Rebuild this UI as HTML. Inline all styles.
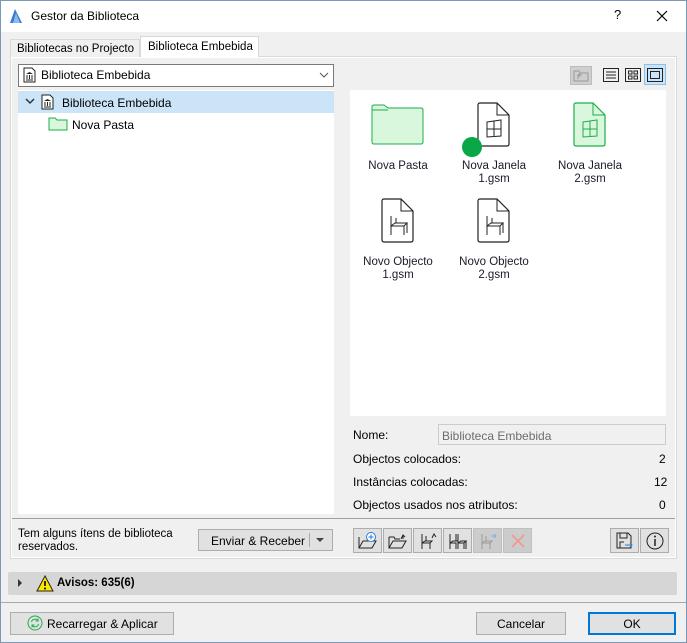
<!DOCTYPE html>
<html><head><meta charset="utf-8"><style>
*{box-sizing:border-box;margin:0;padding:0}
body{width:687px;height:643px;overflow:hidden;font-family:"Liberation Sans",sans-serif;font-size:12px;color:#000;background:#f0f0f0;position:relative}
.a{position:absolute}
.win{left:0;top:0;width:687px;height:643px;border:1px solid #7a98b8;background:#f0f0f0}
.btn{position:absolute;background:#e1e1e1;border:1px solid #adadad;text-align:center}
.ib{position:absolute;width:29px;height:25px;background:#e1e1e1;border:1px solid #adadad}
.ib svg{position:absolute;left:4px;top:3px}
.lbl{position:absolute;text-align:center;width:90px;font-size:11.5px;line-height:13px;color:#1a1a2a}
</style></head><body>
<div class="a win"></div>
<div class="a" style="left:1px;top:1px;width:685px;height:31px;background:#fff"></div>
<svg class="a" style="left:9px;top:8px" width="14" height="16"><path d="M1 15 L6 1 L13 15 Z" fill="#3a7bd5"/><path d="M4 15 L7 5 L11 15Z" fill="#8fb8ee"/></svg>
<div class="a" style="left:31px;top:9px;font-size:12px">Gestor da Biblioteca</div>
<div class="a" style="left:614px;top:7px;font-size:13px">?</div>
<svg class="a" style="left:656px;top:10px" width="12" height="12"><path d="M1 1L11 11M11 1L1 11" stroke="#000" stroke-width="1.2"/></svg>

<div class="a" style="left:10px;top:56px;width:667px;height:503px;border:1px solid #d9d9d9;background:#f0f0f0"></div>
<div class="a" style="left:10px;top:39px;width:130px;height:18px;border:1px solid #d9d9d9;border-bottom:none;background:#f0f0f0;padding:3px 0 0 6px;font-size:11.5px">Bibliotecas no Projecto</div>
<div class="a" style="left:140px;top:36px;width:119px;height:21px;border:1px solid #d9d9d9;border-bottom:none;background:#fff;padding:4px 0 0 7px;font-size:11.5px">Biblioteca Embebida</div>
<div class="a" style="left:11px;top:57px;width:665px;height:501px;background:#fff"></div>
<div class="a" style="left:12px;top:58px;width:663px;height:499px;background:#f0f0f0"></div>

<div class="a" style="left:18px;top:64px;width:316px;height:23px;border:1px solid #7a7a7a;background:#fff"></div>
<svg class="a" style="left:23px;top:67px" width="13" height="16"><path d="M1 1H9L12 4V15H1Z" fill="#fff" stroke="#222"/><path d="M3 7L6.5 5L10 7ZM3.5 8h1v4h-1zM6 8h1v4H6zM8.5 8h1v4h-1zM3 12.5h7v1H3z" fill="#222"/></svg>
<div class="a" style="left:41px;top:68px;font-size:12px">Biblioteca Embebida</div>
<svg class="a" style="left:319px;top:72px" width="10" height="6"><path d="M1 1L5 5L9 1" stroke="#555" fill="none"/></svg>

<div class="a" style="left:18px;top:90px;width:316px;height:424px;background:#fff"></div>
<div class="a" style="left:18px;top:91px;width:316px;height:22px;background:#cce4f7"></div>
<svg class="a" style="left:25px;top:98px" width="10" height="7"><path d="M1 1L5 5L9 1" stroke="#333" stroke-width="1.5" fill="none"/></svg>
<svg class="a" style="left:41px;top:94px" width="13" height="16"><path d="M1 1H9L12 4V15H1Z" fill="#fff" stroke="#222"/><path d="M3 7L6.5 5L10 7ZM3.5 8h1v4h-1zM6 8h1v4H6zM8.5 8h1v4h-1zM3 12.5h7v1H3z" fill="#222"/></svg>
<div class="a" style="left:62px;top:96px">Biblioteca Embebida</div>
<svg class="a" style="left:48px;top:117px" width="20" height="14"><path d="M1 1H7L9 3H19V13H1Z" fill="#d9f7dc" stroke="#1fae4d"/></svg>
<div class="a" style="left:72px;top:118px">Nova Pasta</div>

<div class="a" style="left:570px;top:66px;width:22px;height:19px;background:#cfcfcf;border:1px solid #bcbcbc"></div>
<svg class="a" style="left:573px;top:69px" width="16" height="13"><path d="M1 2H6L7 4H15V12H1Z" fill="none" stroke="#999"/><path d="M5 10V6H9M7 4.5L5 6L7 7.5" stroke="#999" fill="none"/></svg>
<svg class="a" style="left:603px;top:68px" width="16" height="14"><rect x="0.5" y="0.5" width="15" height="13" fill="none" stroke="#222"/><path d="M3 4H13M3 7H13M3 10H13" stroke="#222"/></svg>
<svg class="a" style="left:625px;top:68px" width="16" height="14"><rect x="0.5" y="0.5" width="15" height="13" fill="none" stroke="#222"/><rect x="3.5" y="3" width="3.5" height="3" fill="none" stroke="#222"/><rect x="9" y="3" width="3.5" height="3" fill="none" stroke="#222"/><rect x="3.5" y="8" width="3.5" height="3" fill="none" stroke="#222"/><rect x="9" y="8" width="3.5" height="3" fill="none" stroke="#222"/></svg>
<div class="a" style="left:644px;top:64px;width:22px;height:21px;background:#cce4f7;border:1px solid #8ac0ee"></div>
<svg class="a" style="left:647px;top:68px" width="16" height="14"><rect x="0.5" y="0.5" width="15" height="13" fill="none" stroke="#222"/><rect x="3.5" y="3.5" width="9" height="7" fill="none" stroke="#222"/></svg>

<div class="a" style="left:350px;top:90px;width:316px;height:326px;background:#fff"></div>
<svg class="a" style="left:371px;top:104px" width="54" height="41"><path d="M1 3Q1 1 3 1H13L17 4H50Q52 4 52 6V38Q52 40 50 40H3Q1 40 1 38Z" fill="#d9f7dc" stroke="#1fae4d"/><path d="M1 6H17" stroke="#1fae4d"/></svg>
<div class="lbl" style="left:353px;top:160px">Nova Pasta</div>

<svg class="a" style="left:477px;top:102px" width="34" height="46"><path d="M3 1H20L32 13V42Q32 44 30 44H3Q1 44 1 42V3Q1 1 3 1Z" fill="#fff" stroke="#222" stroke-width="1.2"/><path d="M20 1V13H32" fill="none" stroke="#222"/><path d="M10 20L24 18V34L10 35Z M17 19V35M10 27H24" fill="none" stroke="#222"/></svg>
<div class="a" style="left:462px;top:137px;width:20px;height:20px;border-radius:50%;background:#08a847"></div>
<div class="lbl" style="left:449px;top:160px">Nova Janela<br>1.gsm</div>

<svg class="a" style="left:573px;top:102px" width="34" height="46"><path d="M3 1H20L32 13V42Q32 44 30 44H3Q1 44 1 42V3Q1 1 3 1Z" fill="#d9f7dc" stroke="#1fae4d" stroke-width="1.2"/><path d="M20 1V13H32" fill="none" stroke="#1fae4d"/><path d="M10 20L24 18V34L10 35Z M17 19V35M10 27H24" fill="none" stroke="#1fae4d"/></svg>
<div class="lbl" style="left:545px;top:160px">Nova Janela<br>2.gsm</div>

<svg class="a" style="left:381px;top:198px" width="34" height="46"><path d="M3 1H20L32 13V42Q32 44 30 44H3Q1 44 1 42V3Q1 1 3 1Z" fill="#fff" stroke="#222" stroke-width="1.2"/><path d="M20 1V13H32" fill="none" stroke="#222"/><path d="M10 18V37M10 28H23V37M10 28L14 25H26L23 28M26 25V35M15 25V20" fill="none" stroke="#222"/></svg>
<div class="lbl" style="left:353px;top:256px">Novo Objecto<br>1.gsm</div>
<svg class="a" style="left:477px;top:198px" width="34" height="46"><path d="M3 1H20L32 13V42Q32 44 30 44H3Q1 44 1 42V3Q1 1 3 1Z" fill="#fff" stroke="#222" stroke-width="1.2"/><path d="M20 1V13H32" fill="none" stroke="#222"/><path d="M10 18V37M10 28H23V37M10 28L14 25H26L23 28M26 25V35M15 25V20" fill="none" stroke="#222"/></svg>
<div class="lbl" style="left:449px;top:256px">Novo Objecto<br>2.gsm</div>

<div class="a" style="left:353px;top:428px">Nome:</div>
<div class="a" style="left:438px;top:424px;width:228px;height:21px;border:1px solid #ccc;background:#f0f0f0;color:#6d6d6d;padding:4px 0 0 3px">Biblioteca Embebida</div>
<div class="a" style="left:353px;top:452px">Objectos colocados:</div><div class="a" style="left:659px;top:452px">2</div>
<div class="a" style="left:353px;top:475px">Instâncias colocadas:</div><div class="a" style="left:654px;top:475px">12</div>
<div class="a" style="left:353px;top:498px">Objectos usados nos atributos:</div><div class="a" style="left:659px;top:498px">0</div>

<div class="a" style="left:12px;top:518px;width:663px;height:1px;background:#a0a0a0"></div>
<div class="a" style="left:18px;top:528px;font-size:11.5px;line-height:13px">Tem alguns ítens de biblioteca<br>reservados.</div>
<div class="btn" style="left:198px;top:529px;width:135px;height:22px;padding-top:4px;text-align:left;padding-left:12px">Enviar &amp; Receber</div>
<div class="a" style="left:309px;top:533px;width:1px;height:14px;background:#aaa"></div>
<div class="a" style="left:316px;top:538px;border:4px solid transparent;border-top:4px solid #444"></div>

<div class="ib" style="left:353px;top:528px"><svg width="20" height="18"><path d="M1 5V16H14L18 9H5L1 16" fill="none" stroke="#222"/><circle cx="13" cy="5" r="4.5" fill="#fff" stroke="#2a7ad5"/><path d="M13 2.5V7.5M10.5 5H15.5" stroke="#2a7ad5"/></svg></div>
<div class="ib" style="left:383px;top:528px"><svg width="20" height="18"><path d="M1 5H6L7 7H12M1 5V16H14L18 9H5L1 16" fill="none" stroke="#222"/><path d="M13 7L15 3L17 5M15 3V7" fill="none" stroke="#222"/></svg></div>
<div class="ib" style="left:413px;top:528px"><svg width="20" height="18"><path d="M4 2V17M4 11H12V17M4 11L7 9H14L12 11M8 9V4" fill="none" stroke="#222"/><path d="M14 6L16 2L18 5" fill="none" stroke="#222"/></svg></div>
<div class="ib" style="left:443px;top:528px"><svg width="20" height="18"><path d="M2 2V17M2 11H8V17M2 11L5 9H10M8 2V9M10 2V17M10 11H16V17M10 11L13 9H18L16 11M18 9V17" fill="none" stroke="#222"/></svg></div>
<div class="ib" style="left:473px;top:528px;background:#cccccc;border-color:#bfbfbf"><svg width="20" height="18"><path d="M4 2V17M4 11H12V17M4 11L7 9H14L12 11M8 9V4" fill="none" stroke="#9a9a9a"/><path d="M13 4H18M16 2L18 4L16 6" fill="none" stroke="#7ab0ee"/></svg></div>
<div class="ib" style="left:503px;top:528px;background:#cccccc;border-color:#bfbfbf"><svg width="20" height="18"><path d="M4 3L16 15M16 3L4 15" stroke="#f09a8c" stroke-width="1.6"/></svg></div>
<div class="ib" style="left:610px;top:528px"><svg width="20" height="18"><path d="M2 1H13L16 4V16H2Z M5 1V6H12V1 M5 16V10H9" fill="none" stroke="#222"/><path d="M10 13H17M15 11L17 13L15 15" fill="none" stroke="#2a7ad5"/></svg></div>
<div class="ib" style="left:640px;top:528px"><svg width="20" height="18"><circle cx="10" cy="9" r="8" fill="none" stroke="#222"/><path d="M10 7V14" stroke="#222" stroke-width="1.5"/><circle cx="10" cy="4.5" r="1" fill="#222"/></svg></div>

<div class="a" style="left:8px;top:572px;width:669px;height:23px;background:#d6d6d6;border-radius:2px"></div>
<div class="a" style="left:18px;top:579px;border:4px solid transparent;border-left:4px solid #333"></div>
<svg class="a" style="left:36px;top:575px" width="18" height="17"><path d="M9 1L17 16H1Z" fill="#ffe800" stroke="#222"/><path d="M9 6V11" stroke="#000" stroke-width="1.6"/><circle cx="9" cy="13.5" r="1" fill="#000"/></svg>
<div class="a" style="left:57px;top:577px;font-weight:bold;font-size:11.5px">Avisos: 635(6)</div>

<div class="a" style="left:1px;top:602px;width:685px;height:1px;background:#a8a8a8"></div>
<div class="btn" style="left:10px;top:612px;width:164px;height:23px"></div>
<svg class="a" style="left:27px;top:615px" width="16" height="16"><circle cx="8" cy="8" r="7" fill="none" stroke="#1fae4d"/><path d="M4.5 7A3.5 3.5 0 0 1 11 6M11 3.5V6H8.5M11.5 9A3.5 3.5 0 0 1 5 10M5 12.5V10H7.5" fill="none" stroke="#1fae4d"/></svg>
<div class="a" style="left:47px;top:617px">Recarregar &amp; Aplicar</div>
<div class="btn" style="left:476px;top:612px;width:90px;height:23px;padding-top:4px">Cancelar</div>
<div class="btn" style="left:588px;top:612px;width:88px;height:23px;padding-top:3px;border:2px solid #0078d7">OK</div>
</body></html>
